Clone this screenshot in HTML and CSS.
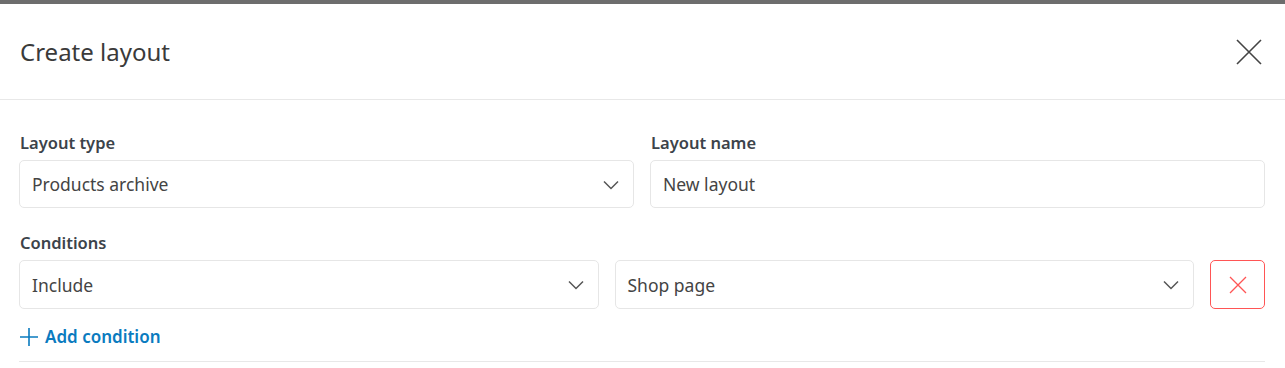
FILE: index.html
```html
<!DOCTYPE html>
<html lang="en">
<head>
  <meta charset="UTF-8" />
  <meta name="viewport" content="width=device-width, initial-scale=1.0"/>
  <title>Create layout</title>
  <link rel="stylesheet" href="styles.css">
</head>
<body>
  <div class="backdrop"></div>

  <div class="modal">
    <div class="modal-header">
      <h2>Create layout</h2>
      <button class="close-btn" aria-label="Close">
        <svg width="26" height="26" viewBox="0 0 26 26"><path d="M1 1L25 25M25 1L1 25" stroke="#444" stroke-width="1.6" fill="none"/></svg>
      </button>
    </div>

    <div class="modal-body">
      <div class="row two-col">
        <div class="form-group">
          <label>Layout type</label>
          <div class="field select">
            <span>Products archive</span>
            <svg class="chevron" width="16" height="10" viewBox="0 0 16 10"><path d="M1 1.5L8 8.5L15 1.5" stroke="#555" stroke-width="1.5" fill="none"/></svg>
          </div>
        </div>
        <div class="form-group">
          <label>Layout name</label>
          <div class="field">
            <span>New layout</span>
          </div>
        </div>
      </div>

      <div class="form-group">
        <label>Conditions</label>
        <div class="condition-row">
          <div class="field select">
            <span>Include</span>
            <svg class="chevron" width="16" height="10" viewBox="0 0 16 10"><path d="M1 1.5L8 8.5L15 1.5" stroke="#555" stroke-width="1.5" fill="none"/></svg>
          </div>
          <div class="field select">
            <span>Shop page</span>
            <svg class="chevron" width="16" height="10" viewBox="0 0 16 10"><path d="M1 1.5L8 8.5L15 1.5" stroke="#555" stroke-width="1.5" fill="none"/></svg>
          </div>
          <button class="remove-btn" aria-label="Remove condition">
            <svg width="18" height="18" viewBox="0 0 18 18"><path d="M1 1L17 17M17 1L1 17" stroke="#f55" stroke-width="1.3" fill="none"/></svg>
          </button>
        </div>
      </div>

      <a class="add-link" href="#">
        <svg width="20" height="20" viewBox="0 0 20 20"><path d="M10 1V19M1 10H19" stroke="#0a7bbf" stroke-width="1.6" fill="none"/></svg>
        Add condition
      </a>

      <div class="divider"></div>
    </div>
  </div>
</body>
</html>
```
FILE: styles.css
```css
body {
  margin: 0;
  background-color: #fff;
  color: #3c434a;
  font-family: 'Noto Sans', 'Open Sans', sans-serif;
}

.backdrop {
  height: 4px;
  background-color: #6d6d6d;
}

.modal-header {
  height: 95px;
  display: flex;
  align-items: center;
  justify-content: space-between;
  padding: 0 20px;
  border-bottom: 1px solid #e8e8e8;
}

.modal-header h2 {
  margin: 0;
  font-size: 24px;
  font-weight: 400;
  color: #3a3a3a;
}

.close-btn {
  background: none;
  border: none;
  padding: 0;
  margin-right: 3px;
  display: flex;
}

.modal-body {
  padding: 32px 20px 0 19px;
}

.two-col {
  display: grid;
  grid-template-columns: 1fr 1fr;
  gap: 16px;
  margin-bottom: 24px;
}

label {
  display: block;
  font-size: 16.5px;
  line-height: 22px;
  font-weight: 600;
  margin-bottom: 6px;
  margin-left: 1px;
}

.field {
  height: 46px;
  border: 1px solid #e6e6e6;
  border-radius: 5px;
  box-sizing: content-box;
  display: flex;
  align-items: center;
  justify-content: space-between;
  padding: 0 14px 0 12px;
  font-size: 17.5px;
  color: #444;
}

.condition-row {
  display: grid;
  grid-template-columns: 1fr 1fr 55px;
  gap: 16px;
}

.condition-row .field {
  height: 47px;
}

.chevron {
  margin-top: 1px;
}

.remove-btn {
  height: 49px;
  background: #fff;
  border: 1px solid #f55;
  border-radius: 5px;
  display: flex;
  align-items: center;
  justify-content: center;
  padding: 0;
}

.add-link {
  display: inline-flex;
  align-items: center;
  gap: 6px;
  margin-top: 16px;
  color: #0a7bbf;
  font-size: 17px;
  font-weight: 600;
  text-decoration: none;
}

.divider {
  margin-top: 9px;
  border-top: 1px solid #e8e8e8;
}
```
